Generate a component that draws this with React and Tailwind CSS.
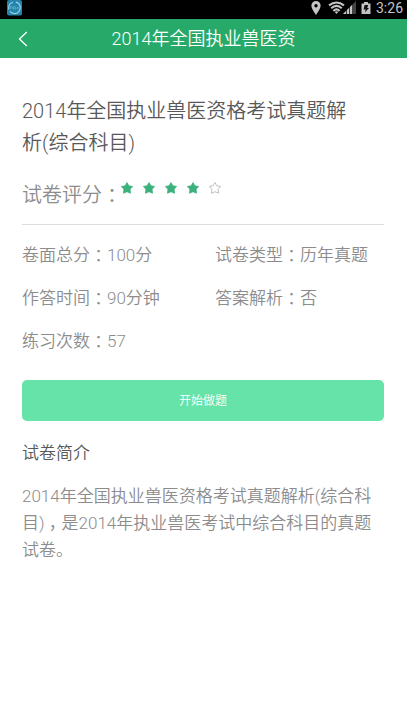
import React from "react";

const STAR = "M6 0.6 L7.8 3.7 L11.6 4.5 L9.1 7.3 L9.5 11.2 L6 9.7 L2.5 11.2 L2.9 7.3 L0.4 4.5 L4.2 3.7 Z";

function Punct({ children }) {
  return <span className="inline-block w-[1em] text-center [font-feature-settings:'halt']">{children}</span>;
}

function Star({ filled }) {
  return (
    <svg viewBox="0 0 12 12" className="size-3" aria-hidden="true">
      <path
        d={STAR}
        fill={filled ? "#3bb27c" : "none"}
        stroke={filled ? "#3bb27c" : "#a3a3a3"}
        strokeWidth={filled ? 0.8 : 0.7}
        strokeLinejoin="round"
      />
    </svg>
  );
}

function Field({ label, value }) {
  return (
    <div className="flex">
      <dt>{label}<Punct>：</Punct></dt>
      <dd>{value}</dd>
    </div>
  );
}

function StatusBar() {
  return (
    <div className="flex h-[19px] items-start justify-between bg-black pr-1 pl-[7px] text-[#c4c4c4]">
      <svg viewBox="0 0 15 16" className="h-4 w-[15px]" aria-label="nox">
        <rect width="15" height="15.5" rx="2" fill="#2385ad" />
        <circle cx="7.5" cy="7.8" r="5.8" fill="none" stroke="#9fd0e2" strokeWidth="1.2" strokeDasharray="14 2 9 3" />
        <path d="M3.6 9V6.7h1.7V9M6.6 6.7h1.8V9H6.6ZM9.7 6.7l2 2.3M11.7 6.7l-2 2.3" fill="none" stroke="#6db3cf" strokeWidth="0.7" />
      </svg>
      <div className="flex h-4 items-center">
        <svg viewBox="0 0 10 14" className="mr-[7px] h-[14px] w-[10px]" aria-hidden="true">
          <path fillRule="evenodd" d="M5 0a4.6 4.6 0 0 0-4.6 4.6C.4 8 5 14 5 14s4.6-6 4.6-9.4A4.6 4.6 0 0 0 5 0Zm0 3a1.7 1.7 0 1 1 0 3.4A1.7 1.7 0 0 1 5 3Z" fill="currentColor" />
        </svg>
        <svg viewBox="0 0 28 14" className="mr-[5px] h-[14px] w-7" aria-hidden="true">
          <g fill="none" stroke="currentColor" strokeWidth="2.1">
            <path d="M1 4.4Q8.5-1.4 16 4.4" />
            <path d="M3.2 7.2Q8.5 2.6 13.8 7.2" />
            <path d="M5.4 9.9Q8.5 6.8 11.6 9.9" />
          </g>
          <path d="M6.8 11Q8.5 9.6 10.2 11L8.5 13Z" fill="currentColor" />
          <path d="M28 0v13H15Z" fill="#444" />
          <path d="M24 4v9H15Z" fill="currentColor" />
          <path d="M18.5 8v5M21.5 5v8" stroke="#000" strokeWidth="0.7" />
        </svg>
        <svg viewBox="0 0 10 14" className="mr-[5px] h-[14px] w-[10px]" aria-hidden="true">
          <path d="M3 1h4v1.5h2.5V13h-9V2.5H3Z" fill="currentColor" />
          <path d="M3.6 4h3.6L6.2 6.9H8L3.8 11.6 4.8 8.4H2.6Z" fill="#111" />
        </svg>
        <span className="text-[14px] leading-4 font-normal">3:26</span>
      </div>
    </div>
  );
}

export default function App() {
  return (
    <div className="min-h-screen bg-white font-[Roboto,'Noto_Sans_CJK_SC',sans-serif] text-[17px] font-[350] text-[#8c8c8c]">
      <StatusBar />
      <header className="grid h-[39px] grid-cols-[44px_1fr_44px] items-center bg-[#27aa69] text-white">
        <button type="button" aria-label="返回" className="flex h-full items-center pl-[18px]">
          <svg viewBox="0 0 10 16" className="h-4 w-[10px]" fill="none" stroke="currentColor" strokeWidth="1.3" aria-hidden="true">
            <path d="M8.8 1 1.5 8l7.3 7" />
          </svg>
        </button>
        <h1 className="text-center text-[18px] leading-6 font-[350]">2014年全国执业兽医资</h1>
      </header>
      <main className="pt-[37px] pr-[23px] pl-[22px]">
        <h2 className="pr-5 text-[20px] leading-8 font-[350] text-[#585858]">2014年全国执业兽医资格考试真题解析(综合科目)</h2>
        <div className="mt-5 flex border-b border-[#ddd] pb-[13px] text-[20px] leading-8">
          <span className="-mr-px">试卷评分<Punct>：</Punct></span>
          <div className="flex gap-[10px] pt-[3px]" role="img" aria-label="4 / 5">
            <Star filled />
            <Star filled />
            <Star filled />
            <Star filled />
            <Star />
          </div>
        </div>
        <dl className="mt-[17px] grid grid-cols-[193px_1fr] gap-y-[17px] leading-[26px]">
          <Field label="卷面总分" value="100分" />
          <Field label="试卷类型" value="历年真题" />
          <Field label="作答时间" value="90分钟" />
          <Field label="答案解析" value="否" />
          <Field label="练习次数" value="57" />
        </dl>
        <button type="button" className="mt-[26px] block h-[41px] w-full rounded-[5px] bg-[#66e3a8] text-[12px] text-white">开始做题</button>
        <h3 className="mt-[19px] leading-[27px] font-[350] text-[#585858]">试卷简介</h3>
        <p className="mt-4 leading-[27px]">
          2014年全国执业兽医资格考试真题解析(综合科目)<Punct>，</Punct>是2014年执业兽医考试中综合科目的真题试卷。
        </p>
      </main>
    </div>
  );
}
